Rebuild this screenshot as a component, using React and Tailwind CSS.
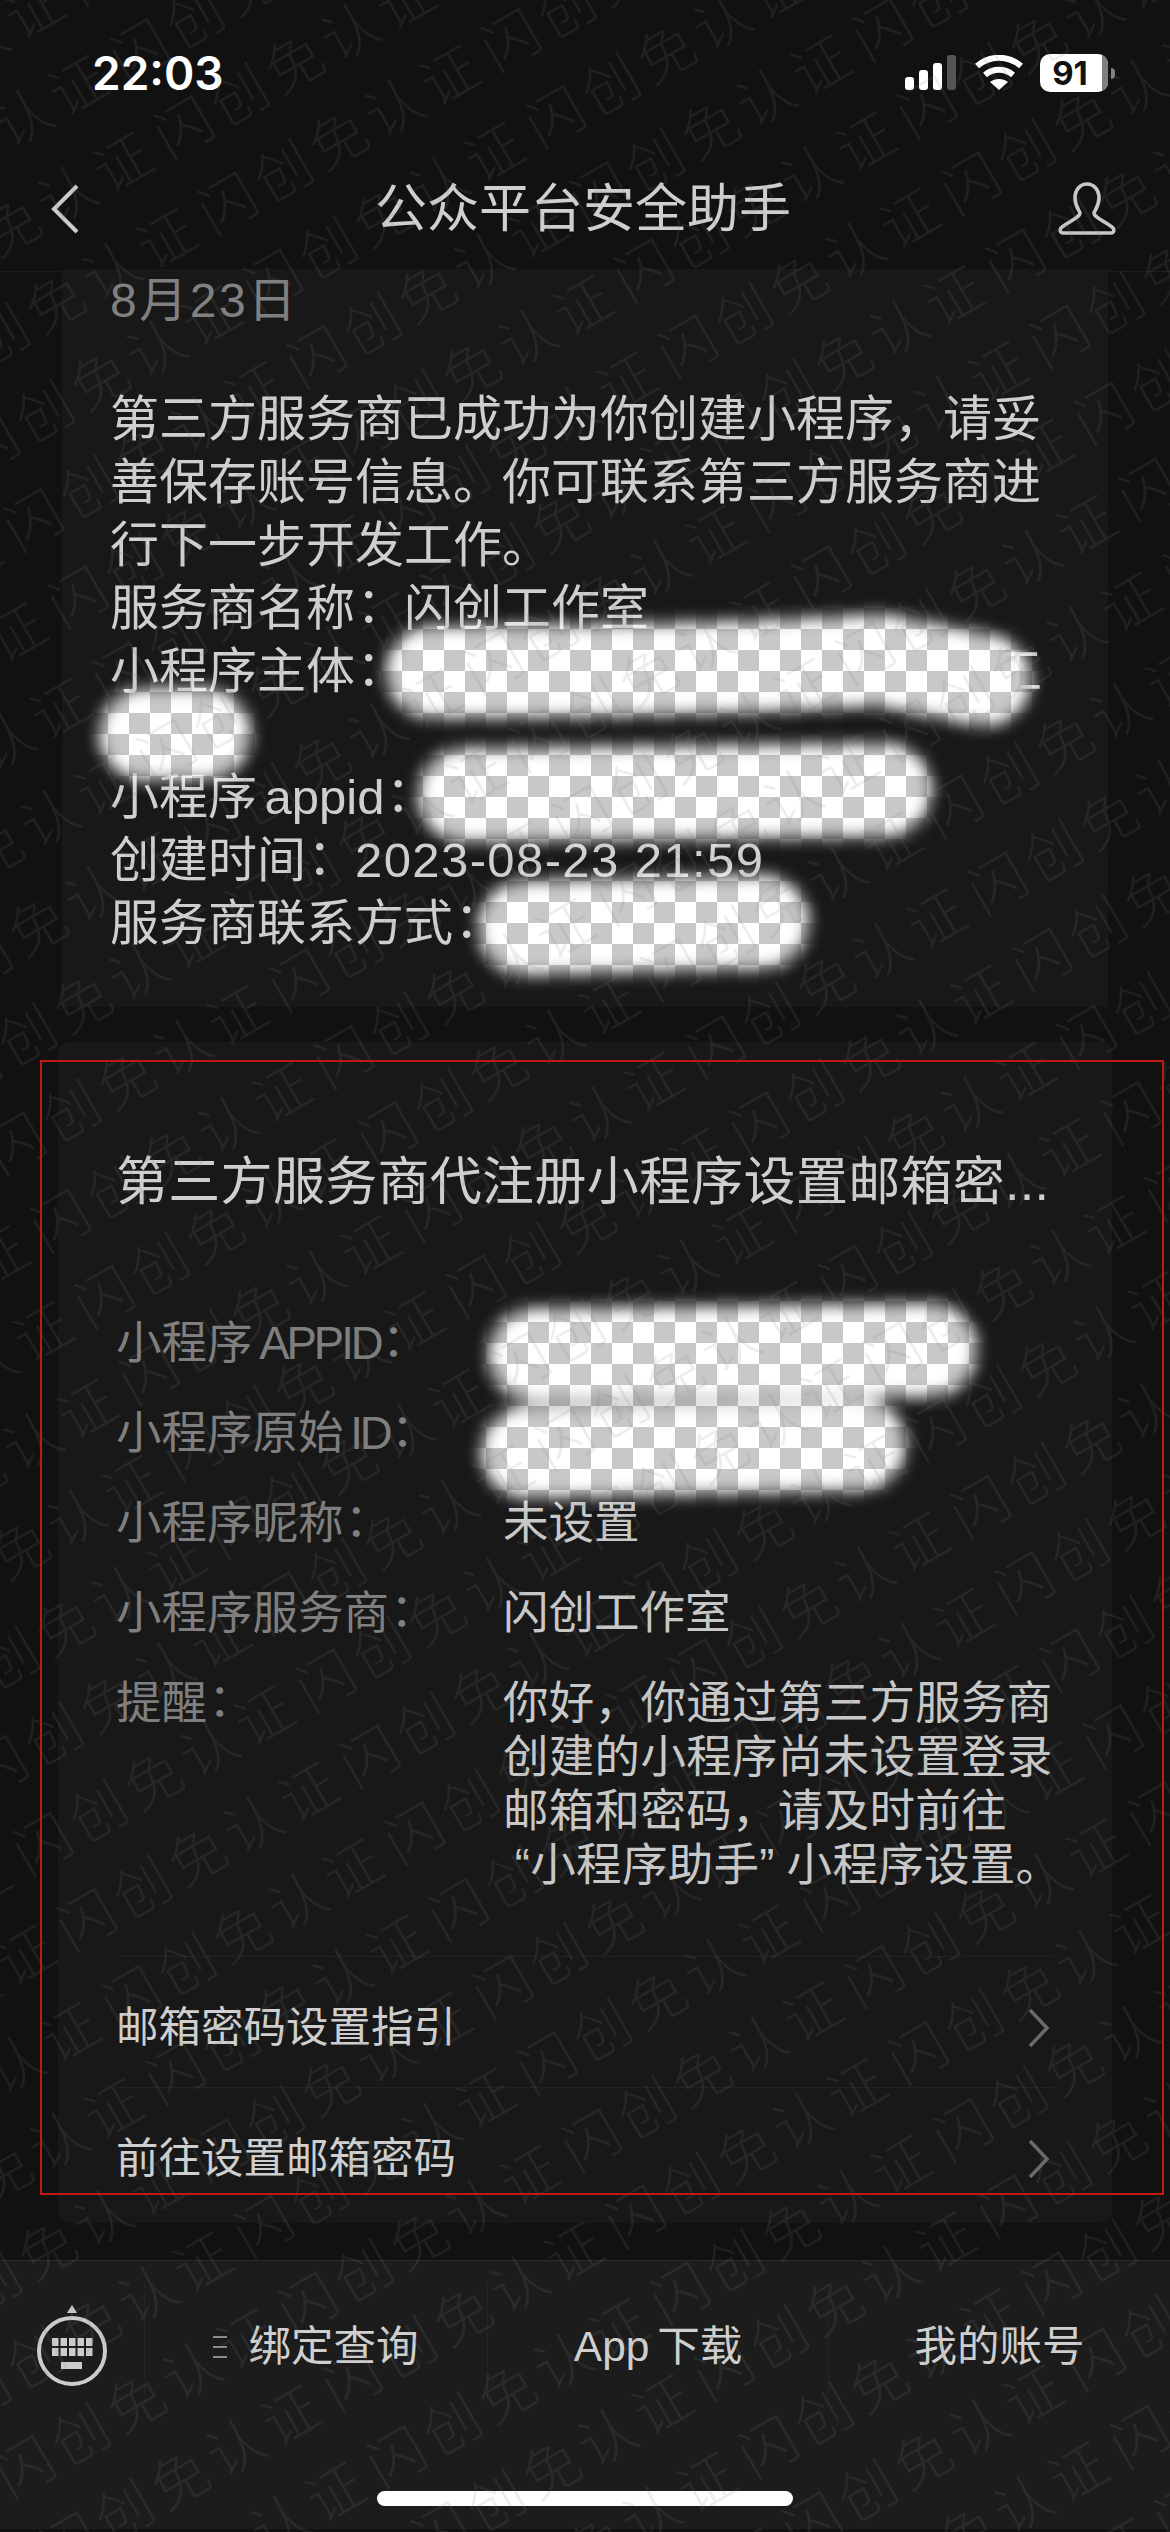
const Colon = () => <span className="inline-block leading-none -ml-[0.22em] mr-[0.22em] font-['Noto_Sans_CJK_TC',sans-serif]">：</span>;

const rows = [
  { label: '小程序', latin: 'APPID', value: '' },
  { label: '小程序原始', latin: 'ID', value: '' },
  { label: '小程序昵称', value: '未设置' },
  { label: '小程序服务商', value: '闪创工作室' },
];

const tipLines = ['你好，你通过第三方服务商', '创建的小程序尚未设置登录', '邮箱和密码，请及时前往'];

const Chevron = () => (
  <svg className="mr-[3px]" width="24" height="40" viewBox="0 0 24 40" fill="none" stroke="#6a6a6a" strokeWidth="3.5">
    <path d="M3 2 L20 20 L3 38" />
  </svg>
);

const Watermark = () => (
  <div className="absolute inset-0 overflow-hidden pointer-events-none">
    <div className="absolute left-[-1411px] top-[691px] w-[3300px] -rotate-30 origin-top-left">
      {Array.from({ length: 34 }).map((_, i) => (
        <div
          key={i}
          className="h-[88.5px] leading-[88.5px] text-[57px] tracking-[7px] [word-spacing:-16px] whitespace-nowrap text-[rgba(128,128,128,0.14)] font-light"
        >
          {'闪创免认证 '.repeat(10)}
        </div>
      ))}
    </div>
  </div>
);

const Censors = () => (
  <svg className="absolute left-0 top-0 pointer-events-none" width="1170" height="2532" viewBox="0 0 1170 2532">
    <defs>
      <pattern id="checker" width="42" height="42" patternUnits="userSpaceOnUse" x="24" y="20">
        <rect width="42" height="42" fill="#fff" />
        <rect width="21" height="21" fill="#c8c8c8" />
        <rect x="21" y="21" width="21" height="21" fill="#c8c8c8" />
      </pattern>
      <filter id="soft" x="-20%" y="-20%" width="140%" height="140%">
        <feGaussianBlur stdDeviation="8" />
      </filter>
      <mask id="blobs" maskUnits="userSpaceOnUse" x="0" y="0" width="1170" height="2532">
        <g filter="url(#soft)" fill="none" stroke="#fff" strokeLinecap="round">
          <path d="M432 672 C600 672 750 668 880 660 L985 680" strokeWidth="92" />
          <path d="M145 734 L205 734" strokeWidth="92" />
          <path d="M465 795 L885 790" strokeWidth="94" />
          <path d="M525 928 L762 922" strokeWidth="94" />
          <path d="M535 1355 L930 1350" strokeWidth="94" />
          <path d="M527 1452 L860 1445" strokeWidth="92" />
        </g>
      </mask>
    </defs>
    <rect width="1170" height="2532" fill="url(#checker)" mask="url(#blobs)" />
  </svg>
);

const App = () => {
  return (
    <div className="relative w-[1170px] h-[2532px] overflow-hidden bg-[#111111] font-['Liberation_Sans','Noto_Sans_CJK_SC',sans-serif] text-[#cfcfcf]">
      {/* status bar */}
      <div className="h-[146px] flex items-center justify-between pl-[92px] pr-[55px]">
        <span className="text-[46px] font-semibold text-white font-['Inter',sans-serif]">22:03</span>
        <div className="flex items-center">
          <svg width="53" height="36" viewBox="0 0 53 36">
            <rect x="0" y="22" width="9" height="13" rx="3" fill="#fff" />
            <rect x="14" y="15" width="9" height="20" rx="3" fill="#fff" />
            <rect x="28" y="8" width="9" height="27" rx="3" fill="#fff" />
            <rect x="42" y="0" width="9" height="35" rx="3" fill="#555" />
          </svg>
          <svg className="ml-[17px]" width="48" height="36" viewBox="0 0 48 36" fill="none" stroke="#fff" strokeWidth="6">
            <path d="M2 11 C15 0 33 0 46 11" />
            <path d="M10 20 C18 13 30 13 38 20" />
            <path d="M24 35 L15 27 C20 23 28 23 33 27 Z" fill="#fff" stroke="none" />
          </svg>
          <div className="relative ml-[17px] w-[68px] h-[38px] rounded-[10px] overflow-hidden bg-white flex items-center justify-center">
            <div className="absolute right-0 top-0 bottom-0 w-[6px] bg-[#808080]" />
            <span className="text-[33px] leading-none font-bold text-[#111] font-['Inter',sans-serif] pr-[8px]">91</span>
          </div>
          <div className="ml-[3px] w-[4px] h-[11px] rounded-r-full bg-[#808080]" />
        </div>
      </div>

      {/* nav */}
      <div className="h-[126px] pt-[2px] pb-[2px] border-b border-[#1e1e1e] flex items-center justify-between pl-[50px] pr-[54px]">
        <div className="w-[120px]">
          <svg width="30" height="50" viewBox="0 0 30 50" fill="none" stroke="#cccccc" strokeWidth="4">
            <path d="M27 2 L4 25 L27 48" />
          </svg>
        </div>
        <span className="text-[52px]">公众平台安全助手</span>
        <div className="w-[120px] flex justify-end">
          <svg width="58" height="54" viewBox="0 0 58 54" fill="none" stroke="#c8c8c8" strokeWidth="3.6">
            <path d="M29 2 C36 2 41 8 41 16 C41 24 37 28 36 31 C36 35 44 38 54 45 C57 47 56 51 53 51 L5 51 C2 51 1 47 4 45 C14 38 22 35 22 31 C21 28 17 24 17 16 C17 8 22 2 29 2 Z" />
          </svg>
        </div>
      </div>

      {/* message card */}
      <div className="ml-[62px] w-[1046px] h-[738px] bg-[#181818] pl-[48px] text-[49px] leading-[63px]">
        <div className="-mt-[3px] h-[63px] text-[#808080] text-[48px] tracking-[2.5px]">8月23日</div>
        <div className="mt-[56px]">
          <div className="h-[63px]">第三方服务商已成功为你创建小程序，请妥</div>
          <div className="h-[63px]">善保存账号信息。你可联系第三方服务商进</div>
          <div className="h-[63px]">行下一步开发工作。</div>
          <div className="h-[63px]">服务商名称<Colon />闪创工作室</div>
          <div className="h-[63px] flex justify-between pr-[66px]">
            <span>小程序主体<Colon /></span>
            <span>工</span>
          </div>
          <div className="h-[63px]" />
          <div className="h-[63px] [word-spacing:-6px]">小程序 appid<Colon /></div>
          <div className="h-[63px]">创建时间<Colon /><span className="tracking-[1.4px]">2023-08-23 21:59</span></div>
          <div className="h-[63px]">服务商联系方式<Colon /></div>
        </div>
      </div>

      {/* notice card */}
      <div className="mt-[35px] ml-[58px] w-[1054px] h-[1181px] rounded-[12px] bg-[#181818] pl-[58px] pr-[58px] pt-[110px]">
        <div className="text-[52px] leading-[60px] tracking-[0.3px] whitespace-nowrap">第三方服务商代注册小程序设置邮箱密...</div>
        <div className="mt-[104px] text-[45.5px] leading-[55px]">
          {rows.map(row => (
            <div key={row.label} className="flex h-[90px]">
              <div className="w-[387px] shrink-0 text-[#7f7f7f] [word-spacing:-3px]">
                {row.label}
                {row.latin && <span className="tracking-[-3px]"> {row.latin}</span>}
                <Colon />
              </div>
              <div className="text-[#c8c8c8]">{row.value}</div>
            </div>
          ))}
          <div className="flex">
            <div className="w-[387px] shrink-0 text-[#7f7f7f]">提醒<Colon /></div>
            <div className="text-[#c8c8c8] tracking-[0.3px] whitespace-nowrap">
              {tipLines.map(line => <div key={line} className="h-[54px]">{line}</div>)}
              <div className="h-[54px]">
                <span className="inline-block w-[0.6em] text-right">“</span>小程序助手<span className="inline-block w-[0.6em] text-left">”</span>小程序设置。
              </div>
            </div>
          </div>
        </div>
        <div className="mt-[64px] text-[42.5px]">
          <div className="h-[131px] pt-[12px] border-t border-[#222222] flex items-center justify-between">
            <span>邮箱密码设置指引</span>
            <Chevron />
          </div>
          <div className="h-[131px] pt-[12px] border-t border-[#222222] flex items-center justify-between">
            <span>前往设置邮箱密码</span>
            <Chevron />
          </div>
        </div>
      </div>

      {/* bottom bar */}
      <div className="mt-[37px] h-[269px] bg-[#1c1c1c] border-t border-[#2a2a2a] text-[42.5px]">
        <div className="mt-[22px] h-[120px] grid grid-cols-[144px_343px_341px_342px]">
          <div className="pt-[8px] flex items-center justify-center">
            <svg width="80" height="90" viewBox="0 0 80 90" fill="#cccccc">
              <path d="M35 11 L40 3 L45 11 Z" />
              <circle cx="40" cy="49" r="33" fill="none" stroke="#cccccc" strokeWidth="4" />
              {[20, 28.5, 37, 45.5, 54].map(x => (
                <g key={x}>
                  <rect x={x} y="36" width="6.5" height="8" />
                  <rect x={x} y="46" width="6.5" height="8" />
                </g>
              ))}
              <rect x="29" y="60" width="21" height="7" />
            </svg>
          </div>
          <div className="pt-[8px] border-l border-[#242424] flex items-center justify-center">
            <svg className="mr-[21px]" width="14" height="22" viewBox="0 0 14 22" fill="#8a8a8a">
              <rect y="0" width="14" height="2" />
              <rect y="10" width="14" height="2" />
              <rect y="20" width="14" height="2" />
            </svg>
            <span>绑定查询</span>
          </div>
          <div className="pt-[8px] border-l border-[#242424] flex items-center justify-center [word-spacing:-4px]">App 下载</div>
          <div className="pt-[8px] border-l border-[#242424] flex items-center justify-center">我的账号</div>
        </div>
        <div className="mt-[88px] mx-auto w-[416px] h-[15px] rounded-full bg-white" />
      </div>

      <Censors />
      <Watermark />

      {/* red outline */}
      <div className="absolute left-[40px] top-[1060px] w-[1124px] h-[1135px] border-2 border-[#c01a10] pointer-events-none" />
    </div>
  );
};

export default App;
